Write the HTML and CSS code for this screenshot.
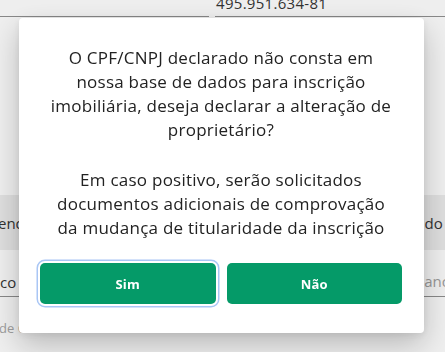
FILE: index.html
```html
<!DOCTYPE html>
<html lang="pt-BR">
<head>
<meta charset="utf-8">
<title>Alteração de proprietário</title>
<link rel="stylesheet" href="styles.css">
</head>
<body>
<div class="page">
  <div class="row top-row">
    <div class="field field-left"></div>
    <div class="field field-right"><span class="value">495.951.634-81</span></div>
  </div>
  <div class="band">
    <span class="band-left">endereço</span>
    <span class="band-right">do e</span>
  </div>
  <div class="row input-row">
    <div class="field field-a"><span class="value">co</span></div>
    <div class="field field-b"><span class="placeholder">anc</span></div>
  </div>
  <div class="note">de Cadastro</div>
</div>

<div class="overlay">
  <div class="modal" role="dialog">
    <p class="msg">O CPF/CNPJ declarado não consta em<br>nossa base de dados para inscrição<br>imobiliária, deseja declarar a alteração de<br>proprietário?</p>
    <p class="msg second">Em caso positivo, serão solicitados<br>documentos adicionais de comprovação<br>da mudança de titularidade da inscrição</p>
    <div class="actions">
      <button class="btn focused">Sim</button>
      <button class="btn">Não</button>
    </div>
  </div>
</div>
</body>
</html>
```

FILE: styles.css
```css
html, body {
  margin: 0;
  padding: 0;
}
body {
  width: 445px;
  height: 352px;
  overflow: hidden;
  background: #f3f3f3;
  font-family: "Open Sans", "Noto Sans", sans-serif;
  color: #222;
}
.page {
  display: flex;
  flex-direction: column;
}
.row {
  display: flex;
  gap: 6px;
}
.top-row {
  height: 17px;
}
.field {
  border-bottom: 1.5px solid #8a8a8a;
  display: flex;
  align-items: flex-end;
  font-size: 15px;
  color: #333;
}
.field-left { width: 209px; }
.field-right { flex: 1; }
.field-right .value {
  padding-left: 1px;
  line-height: 18px;
  margin-bottom: 4px;
  letter-spacing: 0.3px;
}
.band {
  margin-top: 178px;
  height: 55px;
  background: #e2e2e2;
  display: flex;
  justify-content: space-between;
  align-items: center;
  font-size: 15px;
  color: #333;
}
.band-left { margin-left: -2px; }
.band-right { margin-right: -10px; }
.input-row {
  height: 47px;
  gap: 8px;
}
.field-a { flex: 1; }
.field-a .value { margin-bottom: 4px; }
.field-b { width: 150px; justify-content: flex-end; }
.field-b .placeholder { color: #9a9a9a; margin-bottom: 5px; margin-right: -4px; }
.note {
  margin-top: 22px;
  font-size: 13px;
  color: #a0a0a0;
  margin-left: -1px;
}
.overlay {
  position: fixed;
  inset: 0;
  background: rgba(0, 0, 0, 0.02);
}
.modal {
  position: absolute;
  left: 19px;
  top: 18px;
  width: 405px;
  box-sizing: border-box;
  padding: 28px 22px 29px 21px;
  background: #fff;
  border-radius: 4px;
  box-shadow: 0 12px 30px rgba(0, 0, 0, 0.22), 0 2px 8px rgba(0, 0, 0, 0.08);
  display: flex;
  flex-direction: column;
  align-items: stretch;
}
.msg {
  margin: 0;
  text-align: center;
  font-size: 17px;
  letter-spacing: 0.25px;
  line-height: 24px;
  white-space: nowrap;
  color: #222;
}
.second {
  margin-top: 26px;
}
.actions {
  margin-top: 23px;
  display: flex;
  gap: 11px;
}
.btn {
  flex: 1;
  height: 41px;
  border: none;
  border-radius: 5px;
  background: #059a68;
  color: #fff;
  font-family: inherit;
  font-size: 13px;
  font-weight: 700;
  letter-spacing: 0.2px;
  cursor: pointer;
}
.focused {
  box-shadow: 0 0 0 2px #fff, 0 0 0 3.5px #a9c6f5;
}
```
